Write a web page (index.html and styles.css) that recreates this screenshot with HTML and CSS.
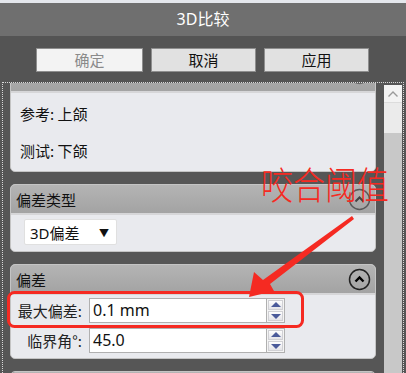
FILE: index.html
```html
<!DOCTYPE html>
<html lang="zh">
<head>
<meta charset="utf-8">
<link rel="stylesheet" href="styles.css">
</head>
<body>
<div class="win">
  <div class="topstrip"></div>
  <div class="titlebar">3D比较</div>
  <div class="toolbar">
    <button class="btn btn-disabled">确定</button>
    <button class="btn">取消</button>
    <button class="btn">应用</button>
  </div>
  <div class="content">
    <div class="panels">
      <section class="panel panel-first">
        <div class="phead">
          <span class="ptitle"></span>
          <span class="collapse up-shift"><svg width="23" height="23" viewBox="0 0 23 23"><circle cx="11.5" cy="11.5" r="10" fill="none" stroke="#6a6a6a" stroke-width="1.3"/><path d="M7.5 13.5 L11.5 9.5 L15.5 13.5" fill="none" stroke="#333" stroke-width="2"/></svg></span>
        </div>
        <div class="pbody info">
          <div class="line">参考: 上颌</div>
          <div class="line">测试: 下颌</div>
        </div>
      </section>
      <section class="panel">
        <div class="phead">
          <span class="ptitle">偏差类型</span>
          <span class="collapse"><svg width="23" height="23" viewBox="0 0 23 23"><circle cx="11.5" cy="11.5" r="10" fill="none" stroke="#5a5a5a" stroke-width="1.4"/><path d="M7.5 13.5 L11.5 9.5 L15.5 13.5" fill="none" stroke="#444" stroke-width="2"/></svg></span>
        </div>
        <div class="pbody typebody">
          <div class="select"><span>3D偏差</span><span class="caret">▼</span></div>
        </div>
      </section>
      <section class="panel">
        <div class="phead">
          <span class="ptitle">偏差</span>
          <span class="collapse"><svg width="23" height="23" viewBox="0 0 23 23"><circle cx="11.5" cy="11.5" r="10" fill="none" stroke="#222" stroke-width="1.5"/><path d="M7.5 13.5 L11.5 9.5 L15.5 13.5" fill="none" stroke="#000" stroke-width="2.4"/></svg></span>
        </div>
        <div class="pbody form">
          <label class="lbl">最大偏差:</label>
          <div class="field">0.1 mm</div>
          <div class="spin"><span class="up"></span><span class="down"></span></div>
          <label class="lbl">临界角°:</label>
          <div class="field">45.0</div>
          <div class="spin"><span class="up"></span><span class="down"></span></div>
        </div>
      </section>
      <section class="panel">
        <div class="phead">
          <span class="ptitle"></span>
          <span class="collapse"><svg width="23" height="23" viewBox="0 0 23 23"><circle cx="11.5" cy="11.5" r="10" fill="none" stroke="#6a6a6a" stroke-width="1.3"/></svg></span>
        </div>
      </section>
    </div>
    <div class="scrollbar">
      <div class="sb-up"><svg width="12" height="8" viewBox="0 0 12 8"><path d="M1.5 6.5 L6 2 L10.5 6.5" fill="none" stroke="#9a9a9a" stroke-width="1.4"/></svg></div>
      <div class="sb-thumb"></div>
      <div class="sb-track"></div>
    </div>
  </div>
  <div class="note">咬合阈值</div>
  <svg class="overlay" width="406" height="373" viewBox="0 0 406 373">
    <rect x="8.5" y="292.5" width="294" height="34" rx="6" ry="6" fill="none" stroke="#f52a22" stroke-width="3"/>
    <polygon points="352,216 354,219 270,284 274,291 249,297 254,272 263,280" fill="#f52a22"/>
  </svg>
</div>
</body>
</html>
```
FILE: styles.css
```css
* { box-sizing: border-box; }
html, body { margin: 0; padding: 0; }
body {
  width: 406px;
  height: 373px;
  overflow: hidden;
  background: #565656;
  font-family: "Noto Sans", "Noto Sans CJK SC", sans-serif;
  font-size: 15px;
  color: #111;
}
.win { position: relative; width: 406px; height: 373px; overflow: hidden; }
.topstrip { height: 3px; background: #e4e7ec; }
.titlebar {
  height: 33px;
  background: #6f6f6f;
  color: #fff;
  font-size: 16px;
  line-height: 33px;
  text-align: center;
}
.toolbar {
  height: 46px;
  background: #545454;
  display: flex;
  gap: 8px;
  padding: 12px 0 0 36px;
}
.btn {
  width: 107px;
  height: 24px;
  background: #e1e1e1;
  border: 1px solid #8e8e8e;
  font-family: "Noto Sans CJK SC", sans-serif;
  font-size: 15px;
  color: #111;
  padding: 0;
  line-height: 20px;
}
.btn-disabled { background: #f3f3f3; color: #8a8a8a; }
.btn + .btn { width: 105px; }

.content {
  height: 291px;
  margin: 0 2px;
  border: 1px dotted #d8d8d8;
  border-bottom: none;
  background: #565656;
  display: flex;
  gap: 8px;
  padding-left: 7px;
  overflow: hidden;
}
.panels {
  width: 366px;
  display: flex;
  flex-direction: column;
  gap: 12px;
  margin-top: -21px;
}
.panel {
  background: #e9eaee;
  border: 1px solid #c4c4c4;
  border-radius: 5px;
  overflow: hidden;
  flex: none;
}
.phead {
  height: 30px;
  background: linear-gradient(#b4b4b4, #a3a3a3);
  border-bottom: 2px solid #d6d6d8;
  display: flex;
  align-items: center;
  justify-content: space-between;
  padding: 0 4px 0 5px;
}
.ptitle { font-family: "Noto Sans CJK SC", sans-serif; font-size: 15px; color: #111; }
.collapse { display: flex; width: 23px; height: 23px; }
.up-shift { margin-top: -8px; }

.info { padding: 2px 0 0 9px; height: 78px; }
.info .line { height: 37px; line-height: 37px; font-family: "Noto Sans CJK SC", sans-serif; }

.typebody { padding: 4px 13px; height: 36px; }
.select {
  width: 93px;
  height: 26px;
  background: #fff;
  border: 1px solid #e0e0e0;
  border-radius: 2px;
  display: flex;
  align-items: center;
  justify-content: space-between;
  padding: 0 7px 0 5px;
}
.caret { font-size: 10px; color: #111; }

.form {
  display: grid;
  grid-template-columns: 78px 177px 19px;
  grid-auto-rows: 25px;
  row-gap: 5px;
  padding: 3px 0 5px 0;
  align-items: center;
}
.lbl {
  text-align: right;
  padding-right: 7px;
  font-family: "Noto Sans CJK SC", sans-serif;
  color: #222;
}
.field {
  height: 25px;
  background: #fff;
  border: 1px solid #b0b0b0;
  border-right: none;
  padding-left: 3px;
  line-height: 23px;
  font-size: 16px;
  color: #111;
}
.spin {
  height: 25px;
  border: 1px solid #b0b0b0;
  background: #f4f4f4;
  display: flex;
  flex-direction: column;
  padding: 1px;
  gap: 1px;
}
.spin span {
  flex: 1;
  background: linear-gradient(#fdfdfd, #e4e4e8);
  border: 1px solid #d0d0d4;
  position: relative;
}
.spin .up::after, .spin .down::after {
  content: "";
  position: absolute;
  left: 50%;
  top: 50%;
  margin-left: -5px;
  border-left: 5px solid transparent;
  border-right: 5px solid transparent;
}
.spin .up::after { margin-top: -3px; border-bottom: 5px solid #4a5a9a; }
.spin .down::after { margin-top: -2px; border-top: 5px solid #4a5a9a; }

.scrollbar {
  width: 18px;
  margin-top: 2px;
  display: flex;
  flex-direction: column;
  background: #c8c8c8;
}
.sb-up { height: 17px; background: #f3f3f3; display: flex; align-items: center; justify-content: center; }
.sb-thumb { height: 31px; background: #ebebeb; border-top: 1px solid #dcdcdc; }
.sb-track { flex: 1; }

.note {
  position: absolute;
  left: 261px;
  top: 160px;
  font-family: "Noto Sans CJK SC", sans-serif;
  font-size: 32px;
  font-weight: 300;
  line-height: 44px;
  color: #f52a22;
  transform: scaleY(1.18);
  transform-origin: 50% 50%;
}
.overlay { position: absolute; left: 0; top: 0; pointer-events: none; }
```
